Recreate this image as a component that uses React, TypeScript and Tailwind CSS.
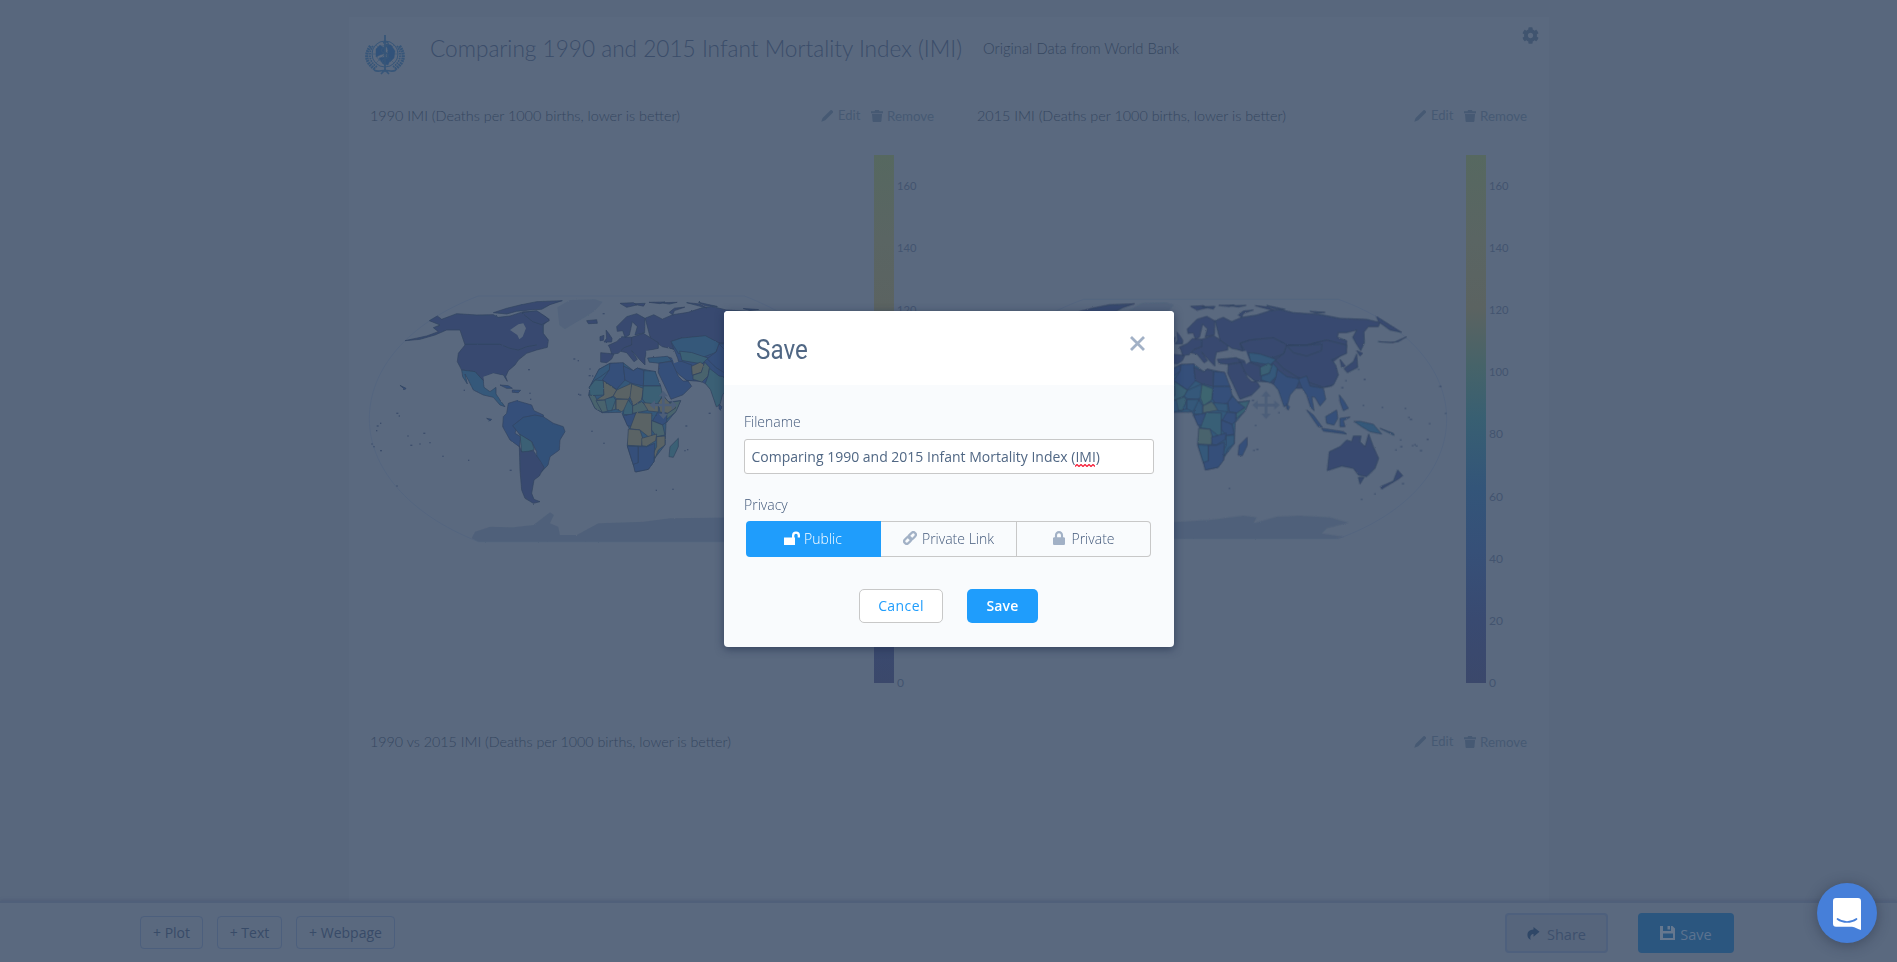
import React from "react";
import { FaCog, FaLock } from "react-icons/fa";

type Region = { d: string; a: string; b: string };

const NAVY = "#384a6f";
const BLUE = "#35507a";
const MID = "#34597a";
const TEAL = "#3a6174";
const GREEN = "#49636d";
const SAND = "#5a6465";
const PAGE = "#5a697f";

const americas: Region[] = [
  { d: "M238,122 L262,108 L275,118 L320,101 L380,105 L430,104 L445,112 L480,108 L520,95 L560,95 L598,118 L580,135 L580,160 L595,180 L592,202 L560,210 L530,220 L505,240 L495,255 L475,272 L467,290 L472,304 L460,285 L430,280 L405,290 L400,302 L375,275 L335,270 L322,245 L325,220 L345,195 L335,165 L330,150 L290,150 L255,165 L210,178 L165,182 L230,168 L265,155 L250,143 L270,135 Z", a: NAVY, b: NAVY },
  { d: "M430,98 L470,85 L510,75 L560,65 L637,62 L600,74 L575,88 L540,90 L500,94 L470,102 Z M515,98 L560,92 L590,112 L598,122 L575,134 L548,125 Z", a: NAVY, b: NAVY },
  { d: "M335,270 L375,275 L400,302 L402,322 L420,335 L438,322 L438,342 L450,360 L465,380 L450,375 L430,352 L400,345 L370,330 L355,300 L345,282 L352,312 L338,290 Z", a: MID, b: MID },
  { d: "M450,315 L475,317 L487,325 L470,325 Z M487,330 L512,331 L505,338 L487,337 Z M410,415 L425,418 L420,423 Z M150,316 L168,325 L165,329 Z", a: BLUE, b: BLUE },
  { d: "M475,370 L500,362 L545,375 L552,392 L580,405 L580,418 L520,412 L505,430 L495,460 L512,470 L508,500 L480,480 L458,440 L460,410 L470,400 Z", a: BLUE, b: BLUE },
  { d: "M488,437 L520,412 L555,405 L580,410 L610,430 L640,440 L645,455 L630,480 L628,510 L600,530 L594,555 L575,575 L560,540 L560,515 L545,485 L510,465 Z", a: "#335179", b: BLUE },
  { d: "M510,463 L545,485 L553,508 L530,518 L515,516 Z", a: TEAL, b: MID },
  { d: "M508,498 L515,516 L550,512 L572,545 L582,562 L568,588 L552,600 L545,640 L552,658 L570,665 L550,670 L525,655 L515,630 L510,570 Z", a: NAVY, b: NAVY },
];

const africaEurope: Region[] = [
  { d: "M747,268 L780,250 L822,250 L850,272 L862,264 L915,275 L935,340 L955,366 L992,362 L975,397 L948,430 L945,495 L914,535 L912,545 L895,568 L858,576 L845,540 L832,498 L840,450 L820,410 L815,397 L757,398 L735,385 L716,345 L720,320 Z", a: MID, b: MID },
  { d: "M710,122 L740,119 L742,130 L715,131 Z M768,150 L776,160 L786,175 L785,186 L762,186 L770,175 Z M750,170 L762,166 L760,181 L750,182 Z", a: NAVY, b: NAVY },
  { d: "M752,218 L792,222 L785,237 L770,248 L752,246 Z", a: NAVY, b: NAVY },
  { d: "M775,196 L800,185 L815,170 L845,172 L845,195 L820,205 L805,220 L785,222 L780,205 Z", a: NAVY, b: NAVY },
  { d: "M845,172 L880,160 L925,188 L925,205 L890,212 L885,235 L885,255 L870,240 L845,212 L862,238 L852,245 L830,218 L812,214 L822,203 L845,195 Z", a: NAVY, b: NAVY },
  { d: "M800,140 L830,110 L860,101 L885,115 L884,158 L855,165 L862,140 L847,125 L838,165 L825,172 L818,152 L802,154 Z", a: NAVY, b: NAVY },
  { d: "M810,70 L850,68 L860,75 L830,82 Z M897,67 L945,66 L930,71 Z M1010,68 L1050,72 L1070,84 L1040,76 Z", a: NAVY, b: NAVY },
  { d: "M747,268 L780,250 L778,270 L752,290 L735,300 L718,322 Z", a: MID, b: BLUE },
  { d: "M780,250 L820,248 L825,300 L800,328 L757,300 L778,270 Z", a: BLUE, b: BLUE },
  { d: "M820,258 L850,272 L862,264 L882,272 L880,318 L845,310 L825,300 Z", a: BLUE, b: NAVY },
  { d: "M882,272 L915,274 L932,318 L880,318 Z", a: MID, b: BLUE },
  { d: "M718,322 L735,300 L760,302 L762,345 L720,347 Z", a: TEAL, b: TEAL },
  { d: "M760,302 L800,330 L790,348 L765,360 L738,360 L762,345 Z", a: SAND, b: TEAL },
  { d: "M800,330 L845,310 L844,345 L835,358 L800,356 L790,348 Z", a: SAND, b: MID },
  { d: "M845,312 L880,325 L875,360 L850,378 L840,352 Z", a: SAND, b: "#3d6570" },
  { d: "M880,318 L932,318 L938,345 L925,370 L890,374 L877,357 Z", a: TEAL, b: BLUE },
  { d: "M925,367 L940,348 L955,365 L985,378 L955,400 L930,396 Z", a: SAND, b: BLUE },
  { d: "M957,368 L992,362 L978,395 L950,418 L950,402 L978,383 Z", a: GREEN, b: TEAL },
  { d: "M798,358 L838,358 L835,380 L815,395 L798,387 Z", a: SAND, b: MID },
  { d: "M716,345 L735,347 L750,380 L757,398 L735,385 Z", a: GREEN, b: MID },
  { d: "M738,362 L797,358 L797,388 L757,397 Z", a: GREEN, b: MID },
  { d: "M765,358 L790,350 L797,360 L785,392 L772,392 Z", a: TEAL, b: TEAL },
  { d: "M835,360 L848,378 L847,405 L820,403 L822,388 Z", a: TEAL, b: MID },
  { d: "M848,378 L875,365 L900,390 L870,396 L848,400 Z", a: GREEN, b: GREEN },
  { d: "M880,368 L925,372 L925,396 L895,393 Z", a: SAND, b: MID },
  { d: "M820,407 L858,400 L848,440 L832,437 Z", a: BLUE, b: BLUE },
  { d: "M858,398 L905,400 L905,450 L905,478 L870,450 L840,446 Z", a: SAND, b: "#375f76" },
  { d: "M922,398 L950,400 L950,425 L938,435 L908,422 Z", a: BLUE, b: BLUE },
  { d: "M905,422 L938,435 L945,465 L920,470 L905,450 Z", a: GREEN, b: BLUE },
  { d: "M835,447 L870,450 L878,475 L875,498 L832,496 Z", a: SAND, b: GREEN },
  { d: "M875,475 L920,462 L917,482 L890,499 L876,497 Z", a: SAND, b: BLUE },
  { d: "M920,470 L945,468 L945,495 L925,510 L915,535 L910,520 L920,500 Z", a: SAND, b: MID },
  { d: "M832,498 L865,500 L865,550 L850,555 Z", a: BLUE, b: MID },
  { d: "M865,500 L890,500 L914,490 L912,545 L895,568 L855,576 L850,553 L865,548 Z", a: BLUE, b: BLUE },
  { d: "M985,475 L985,500 L970,532 L957,530 L960,500 Z", a: TEAL, b: BLUE },
];

const asia: Region[] = [
  { d: "M200,190 L250,180 L380,195 L500,185 L556,215 L520,245 L530,285 L515,318 L495,322 L420,325 L408,325 L345,315 L325,305 L285,303 L240,255 L232,235 L262,245 L250,215 Z", a: BLUE, b: NAVY },
  { d: "M165,122 L190,112 L215,125 L245,112 L290,105 L330,92 L360,88 L400,98 L480,103 L540,115 L620,118 L660,128 L655,140 L625,140 L612,156 L613,188 L602,212 L588,190 L578,172 L590,150 L560,158 L535,158 L532,172 L560,182 L560,200 L555,222 L540,200 L500,180 L440,195 L380,195 L340,175 L270,180 L240,190 L248,212 L215,205 L180,180 Z", a: NAVY, b: NAVY },
  { d: "M650,110 L690,135 L725,157 L690,150 L655,125 Z M235,105 L250,93 L280,90 L250,100 L245,112 Z M320,76 L375,88 L340,86 Z M450,94 L495,97 L470,100 Z M125,80 L165,79 L160,87 Z M210,77 L258,76 L235,81 Z", a: NAVY, b: NAVY },
  { d: "M655,185 L700,188 L740,170 L715,185 L690,187 Z", a: NAVY, b: NAVY },
  { d: "M240,190 L270,180 L340,173 L382,195 L370,222 L335,235 L280,222 L262,225 Z", a: MID, b: NAVY },
  { d: "M380,195 L440,195 L500,180 L560,195 L560,220 L515,240 L527,255 L535,285 L520,315 L490,322 L455,310 L410,290 L370,265 L345,240 L372,220 Z", a: BLUE, b: NAVY },
  { d: "M380,197 L440,196 L486,192 L484,212 L440,228 L400,218 Z", a: BLUE, b: NAVY },
  { d: "M265,218 L300,222 L348,238 L330,255 L300,250 L272,245 Z", a: TEAL, b: MID },
  { d: "M172,238 L230,233 L242,246 L205,253 L177,250 Z", a: MID, b: NAVY },
  { d: "M242,246 L272,248 L300,258 L302,285 L325,305 L285,303 L262,285 L248,268 Z", a: BLUE, b: NAVY },
  { d: "M205,253 L242,248 L262,292 L275,305 L290,305 L300,320 L275,345 L240,358 L220,315 L203,280 Z", a: BLUE, b: NAVY },
  { d: "M300,262 L325,250 L338,258 L328,280 L302,288 Z", a: SAND, b: TEAL },
  { d: "M338,250 L352,265 L348,290 L330,308 L304,300 L304,288 L328,280 Z", a: GREEN, b: MID },
  { d: "M352,268 L380,290 L420,297 L410,322 L390,345 L382,375 L372,380 L355,330 L340,312 L348,290 Z", a: TEAL, b: BLUE },
  { d: "M380,372 L388,380 L385,390 L380,386 Z", a: BLUE, b: BLUE },
  { d: "M415,297 L440,288 L450,318 L490,325 L497,358 L480,378 L465,352 L455,350 L462,392 L452,382 L440,345 L425,322 Z", a: BLUE, b: BLUE },
  { d: "M440,390 L460,405 L487,442 L475,440 Z M485,445 L550,455 L560,462 L490,453 Z M497,410 L530,390 L533,415 L522,435 L500,430 Z M540,415 L570,411 L550,422 L555,440 L540,440 Z M538,345 L550,360 L565,385 L550,392 L540,365 Z", a: BLUE, b: BLUE },
  { d: "M582,424 L600,424 L640,433 L665,462 L630,455 L602,438 Z M660,445 L700,460 L702,466 Z", a: MID, b: MID },
  { d: "M590,222 L593,262 L562,278 L552,266 L580,245 Z M540,238 L556,258 L545,262 Z M590,212 L608,220 L600,228 Z", a: NAVY, b: NAVY },
  { d: "M508,515 L540,500 L560,480 L575,485 L580,468 L603,468 L600,485 L615,500 L626,462 L640,500 L656,535 L645,565 L620,590 L595,585 L580,565 L545,558 L502,572 Z M595,592 L612,592 L600,612 Z", a: NAVY, b: NAVY },
  { d: "M713,570 L728,587 L715,597 L665,627 L662,620 L700,603 Z", a: NAVY, b: NAVY },
];

const specks = [
  [840, 319], [857, 400], [809, 431], [802, 478], [765, 494], [770, 498], [782, 512], [758, 497], [722, 480], [723, 500], [747, 412], [736, 385], [752, 418],
  [610, 376], [667, 382], [613, 298], [645, 642], [605, 658], [728, 611], [287, 436], [282, 511], [291, 508], [208, 625], [357, 398], [278, 361], [708, 510], [596, 268], [546, 323], [558, 302],
];
const westSpecks = [
  [141, 400], [148, 408], [92, 430], [82, 438], [66, 492], [72, 500], [92, 512], [80, 452], [174, 468], [222, 460], [240, 488], [210, 492], [183, 496], [141, 618], [356, 541],
  [481, 571], [343, 331], [279, 529], [672, 237], [685, 242], [720, 267], [718, 287], [728, 288], [686, 343], [690, 345], [762, 490], [726, 454], [760, 101], [919, 631], [969, 628], [1008, 438], [1005, 512], [1013, 509], [1078, 400], [540, 340], [542, 358], [536, 269],
];

function Lands({ items, plot }: { items: Region[]; plot: "a" | "b" }) {
  return (
    <>
      {items.map((r, i) => (
        <path key={i} d={r.d} fill={r[plot]} stroke="#31425f" strokeWidth="2" strokeLinejoin="round" />
      ))}
    </>
  );
}

function MoveMark({ x, y }: { x: number; y: number }) {
  return (
    <g transform={`translate(${x} ${y})`} fill="#4c5e79">
      <path d="M-4,-28 h8 V-4 H28 v8 H4 V28 h-8 V4 H-28 v-8 H-4 Z" />
      <path d="M0,-42 L14,-26 H-14 Z M0,42 L14,26 H-14 Z M-41,0 L-25,-14 V14 Z M41,0 L25,-14 V14 Z" />
    </g>
  );
}

function Dots({ points }: { points: number[][] }) {
  return (
    <g fill="#3d4e6c">
      {points.map(([x, y], i) => (
        <rect key={i} x={x - 2} y={y - 2} width={i % 3 ? 4 : 6} height="4" />
      ))}
    </g>
  );
}

function Scale({ x, id }: { x: number; id: string }) {
  return (
    <g>
      <defs>
        <linearGradient id={id} x1="0" x2="0" y1="0" y2="1">
          <stop offset="0" stopColor="#566860" />
          <stop offset="0.16" stopColor="#5a6563" />
          <stop offset="0.29" stopColor="#5b6361" />
          <stop offset="0.4" stopColor="#466369" />
          <stop offset="0.5" stopColor="#385f72" />
          <stop offset="0.63" stopColor="#335579" />
          <stop offset="0.75" stopColor="#365078" />
          <stop offset="0.88" stopColor="#394a71" />
          <stop offset="1" stopColor="#3b486b" />
        </linearGradient>
      </defs>
      <rect x={x} y="25" width="20" height="528" fill={`url(#${id})`} />
      <g fontFamily="Lato, sans-serif" fontSize="12" fill="#43546f">
        {[160, 140, 120, 100, 80, 60, 40, 20, 0].map((v, i) => (
          <text key={v} x={x + 23} y={60 + i * 62.1} textLength={v > 99 ? 19.5 : v > 9 ? 14 : 7} lengthAdjust="spacingAndGlyphs">
            {v}
          </text>
        ))}
      </g>
    </g>
  );
}

function Roughen({ id }: { id: string }) {
  return (
    <filter id={id} x="-5%" y="-5%" width="110%" height="110%">
      <feTurbulence type="fractalNoise" baseFrequency="0.22" numOctaves="2" seed="4" result="n" />
      <feDisplacementMap in="SourceGraphic" in2="n" scale="5" xChannelSelector="R" yChannelSelector="G" />
    </filter>
  );
}

const greenland = "M622,82 L660,60 L735,58 L758,66 L735,92 L700,115 L665,135 L645,148 L628,135 Z";

function Map1990() {
  return (
    <svg className="block h-[570px] w-[600px]" viewBox="0 0 600 570">
      <defs>
        <Roughen id="rough1" />
      </defs>
      <g transform="translate(2 150) scale(0.33333)">
        <path d="M385,48 H1183 C1398,130 1510,270 1510,416 C1510,560 1398,700 1183,785 H385 C170,700 58,560 58,416 C58,270 170,130 385,48 Z" fill="none" stroke="#54657f" strokeWidth="3" />
        <g filter="url(#rough1)">
          <path d={greenland} fill="#52647c" />
          <path d="M365,775 L375,755 L420,740 L490,742 L550,735 L600,697 L612,705 L600,730 L625,740 L630,765 L680,765 L745,730 L880,725 L960,715 L1190,712 L1190,785 L385,785 Z" fill="#50617a" />
          <g transform="translate(715.5 -11.3) scale(1.031)">
            <Lands items={asia} plot="a" />
          </g>
          <Lands items={americas} plot="a" />
          <Lands items={africaEurope} plot="a" />
          <path d="M480,150 L505,133 L520,130 L528,145 L518,170 L508,178 L502,165 Z M400,290 L430,280 L462,288 L450,300 L420,318 L404,315 Z M888,212 L925,210 L935,225 L905,230 L890,225 Z M955,205 L970,210 L985,245 L972,250 Z" fill={PAGE} />
          <path d="M345,193 H450 L480,205 L505,210 L530,200 L560,195" fill="none" stroke="#31425f" strokeWidth="2" />
        </g>
        <Dots points={westSpecks} />
        <MoveMark x={940} y={375} />
      </g>
      <Scale x={526} id="scale1" />
    </svg>
  );
}

function Map2015() {
  return (
    <svg className="block h-[570px] w-[600px]" viewBox="0 0 600 570">
      <defs>
        <Roughen id="rough2" />
      </defs>
      <g transform="translate(212 150) scale(0.33333)">
        <path d="M-229,58 H535 C750,135 860,275 860,417 C860,560 750,698 535,776 H-229 C-444,698 -554,560 -554,417 C-554,275 -444,135 -229,58 Z" fill="none" stroke="#54657f" strokeWidth="3" />
        <g filter="url(#rough2)">
          <path d="M-240,740 L60,725 L150,720 L250,707 L290,712 L280,730 L350,710 L420,707 L510,712 L565,728 L500,745 L485,760 L550,770 L530,776 L-229,776 Z" fill="#50617a" />
          <g transform="translate(-694 11) scale(0.97)">
            <path d={greenland} fill="#52647c" />
            <Lands items={americas} plot="b" />
            <Lands items={africaEurope} plot="b" />
          </g>
          <Lands items={asia} plot="b" />
          <path d="M175,218 L215,215 L222,228 L200,232 L178,230 Z M245,215 L258,212 L270,245 L258,252 Z" fill={PAGE} />
        </g>
        <Dots points={specks} />
        <MoveMark x={318} y={375} />
      </g>
      <Scale x={518} id="scale2" />
    </svg>
  );
}

function PlotHead({ title, width, pad }: { title: string; width: string; pad: string }) {
  return (
    <div className={`flex h-6 items-center justify-between font-['Lato'] text-[#35475f] ${pad}`}>
      <svg className={`h-6 overflow-visible text-[14.5px] font-light ${width}`}>
        <text x="0" y="17" fill="currentColor" textLength="100%" lengthAdjust="spacingAndGlyphs">
          {title}
        </text>
      </svg>
      <div className="flex items-center text-[13px] text-[#465973]">
        <svg className="mr-[5px] size-3" viewBox="0 0 12 12" fill="currentColor">
          <path d="M9.300.4a1.200 1.200 0 0 1 1.700 0l.7.7a1.200 1.200 0 0 1 0 1.700L4.200 10.300.3 11.700 1.600 7.900z" />
        </svg>
        <span className="w-[33px]">Edit</span>
        <svg className="mr-1 h-3 w-3" viewBox="0 0 12 12" fill="currentColor">
          <path d="M0 1.300h3.500L4.200 0h3.600l.7 1.300H12v1.900H0zM1 4h10l-.6 7a1 1 0 0 1-1 1H2.600a1 1 0 0 1-1-1z" />
        </svg>
        <svg className="h-5 w-[47px] overflow-visible">
          <text x="0" y="15" fill="currentColor" textLength="47" lengthAdjust="spacingAndGlyphs">
            Remove
          </text>
        </svg>
      </div>
    </div>
  );
}

function Emblem() {
  return (
    <svg className="h-[42px] w-[44px]" viewBox="0 0 44 42" fill="none" stroke="#375679">
      <circle cx="22" cy="20" r="13" strokeWidth="1" />
      <circle cx="22" cy="20" r="8.500" strokeWidth="0.6" />
      <path d="M9 20h26M13 11l18 18M31 11L13 29" strokeWidth="0.5" />
      <path d="M13 15l4-4 4 3 1 5-5 2-4 2zM23 10l5 1 4 6-1 7-4 4-3-5 1-6zM16 24l6-1 6 1-3 7-5-1z" fill="#31527a" strokeWidth="0.5" />
      <path d="M7.500 12C1.500 20 2.500 29 12 35M36.500 12C42.500 20 41.500 29 32 35" strokeWidth="3.200" strokeDasharray="1.800 0.700" />
      <path d="M10 12C5 19 6 28 14 33M34 12C39 19 38 28 30 33" strokeWidth="1.800" strokeDasharray="1.600 0.900" />
      <path d="M11 36c5 3 9-1 11 1 2-2 6 2 11-1M18 40l4-4 4 4" strokeWidth="1.600" />
      <path d="M22 1v36" strokeWidth="1.800" />
      <path d="M20 9c6-3 7 2 2 4s-5 5 0 6 4 5 0 6-3 4 0 5" strokeWidth="1.400" />
    </svg>
  );
}

function Dashboard() {
  return (
    <main className="h-[901px] overflow-hidden pl-[349px] pt-[17px]">
      <div className="h-[900px] w-[1200px] bg-[#5a697f]">
        <header className="flex h-[87px] pl-[14px] pt-[17px] font-['Lato'] text-[#35475f]">
          <Emblem />
          <svg className="ml-[23px] mt-px h-8 w-[533px] overflow-visible text-[24px] font-light text-[#3b4d6a]">
            <text x="0" y="21.500" fill="currentColor" textLength="532" lengthAdjust="spacingAndGlyphs">
              Comparing 1990 and 2015 Infant Mortality Index (IMI)
            </text>
          </svg>
          <svg className="ml-5 mt-px h-8 w-[196px] overflow-visible text-[15px] font-light">
            <text x="0" y="18.500" fill="currentColor" textLength="196" lengthAdjust="spacingAndGlyphs">
              Original Data from World Bank
            </text>
          </svg>
          <FaCog className="-mt-[7px] ml-[343px] size-[17px] text-[#40546f]" />
        </header>
        <div className="-ml-px flex">
          <section className="w-[600px]">
            <PlotHead title="1990 IMI (Deaths per 1000 births, lower is better)" width="w-[310px]" pad="pl-[22px] pr-[14px]" />
            <div className="mt-0.5">
              <Map1990 />
            </div>
          </section>
          <section className="w-[600px]">
            <PlotHead title="2015 IMI (Deaths per 1000 births, lower is better)" width="w-[309px]" pad="pl-[29px] pr-[21px]" />
            <div className="mt-0.5">
              <Map2015 />
            </div>
          </section>
        </div>
        <div className="-ml-px mt-[30px] w-[1200px]">
          <PlotHead title="1990 vs 2015 IMI (Deaths per 1000 births, lower is better)" width="w-[361px]" pad="pl-[22px] pr-[21px]" />
          <div className="mt-[147px] flex pl-[129px]">
            <span className="h-1 w-[3px] bg-[#3c4d6a]" />
            <span className="ml-5 h-1 w-[3px] bg-[#46576f]" />
            <span className="ml-[569px] h-1 w-1 bg-[#3c4d6a]" />
            <span className="ml-[194px] h-1 w-2 bg-[#384a6f]" />
          </div>
        </div>
      </div>
    </main>
  );
}

function Footer() {
  const add = "flex h-[33px] items-center justify-center rounded-[4px] border border-[#4c5f7d] pb-px text-[14px] text-[#384b68]";
  return (
    <footer className="relative flex h-[61px] items-start border-t-2 border-[#50607a] bg-[#5a697f] pl-[140px] pr-[163px] shadow-[0_-1px_3px_rgba(60,75,105,0.35)]">
      <div className="mt-[13px] flex gap-[14px]">
        <button className={`w-[63px] ${add}`}>+ Plot</button>
        <button className={`w-[65px] ${add}`}>+ Text</button>
        <button className={`w-[99px] ${add}`}>+ Webpage</button>
      </div>
      <div className="ml-auto mt-[10px] flex gap-[30px]">
        <button className="flex h-10 w-[103px] items-center justify-center gap-[7px] rounded-[4px] border-2 border-[#4e607d] bg-[#56657c] pt-[3px] text-[14.5px] text-[#3d506d]">
          <svg className="-mt-0.5 size-[13px]" viewBox="0 0 13 14" fill="#2f4767">
            <path d="M6.500 0L13 5 6.500 10.500V7.500C3.500 7.500 2.500 10 3.500 14 .5 12 0 10 0 8.500 0 5 2.500 3 6.500 2.800z" />
          </svg>
          Share
        </button>
        <button className="flex h-10 w-24 items-center justify-center gap-[5px] rounded-[4px] bg-[#2b567f] pt-[3px] text-[14.500px] text-[#5c7390]">
          <svg className="-mt-0.5 size-[15px]" viewBox="0 0 15 15" fill="#66788f">
            <path fillRule="evenodd" d="M0 0h3v5h8V0h1.500L15 2.500V14H0zM3 7.500V12h10V7.500z" />
            <path d="M7.500 0h2.500v3.500H7.500z" />
          </svg>
          Save
        </button>
      </div>
    </footer>
  );
}

function SaveDialog() {
  return (
    <div className="absolute left-[724px] top-[311px] h-[336px] w-[450px] overflow-hidden rounded-[4px] bg-[#f9fbfd] shadow-[0_2px_8px_rgba(30,45,75,0.65)]">
      <div className="flex h-[74px] justify-between bg-white pl-8 pr-[29px]">
        <h2 className="mt-[18px] h-10 w-[60px] origin-left scale-x-[0.850] font-['Roboto'] text-[28.5px] leading-[41px] text-[#506784]">Save</h2>
        <svg className="mt-[24.5px] size-[15px]" viewBox="0 0 15 15" stroke="#a2b1c6" strokeWidth="2.800">
          <path d="M1 1l13 13M14 1L1 14" />
        </svg>
      </div>
      <div className="px-5 pt-[26px] text-[14px] text-[#506784]">
        <div className="h-[28px] font-light leading-[22px] text-[#42587a]">Filename</div>
        <div className="flex h-[35px] w-[410px] items-center whitespace-pre rounded-[3px] border border-[#c8c8c8] bg-white px-[6.500px]">
          <span>Comparing 1990 and 2015 Infant Mortality Index (</span>
          <span className="relative">
            IMI
            <svg className="absolute bottom-0 left-0 h-[3px] w-5" viewBox="0 0 20 3" fill="none" stroke="#f5223c" strokeWidth="1.300">
              <path d="M0 2.500l2-2 2 2 2-2 2 2 2-2 2 2 2-2 2 2 2-2 2 2" />
            </svg>
          </span>
          <span>)</span>
        </div>
        <div className="mt-5 h-[27px] font-light leading-[22px] text-[#42587a]">Privacy</div>
        <div className="ml-0.5 flex h-9 w-[405px] font-light text-[#42587a]">
          <div className="flex w-[135px] items-center justify-center gap-1 rounded-l-[4px] bg-[#1f9dfc] pb-px pr-px text-white">
            <svg className="-mt-px h-[14px] w-4" viewBox="0 0 16 14" fill="white">
              <path d="M0 6.500h8V4.500a4 4 0 0 1 8 0V6.500h-2.300V4.500a1.700 1.700 0 0 0-3.400 0v2H11V14H0z" />
            </svg>
            <span>Public</span>
          </div>
          <div className="flex w-[136px] items-center justify-center gap-[5px] border-y border-r border-[#c8c8c8] pb-px">
            <svg className="size-[14px] -mt-px" viewBox="0 0 14 14" fill="none" stroke="#a2b1c6" strokeWidth="2.300">
              <rect x="-3.900" y="-2.500" width="7.800" height="5" rx="2.500" transform="translate(9.300 4.700) rotate(-45)" />
              <rect x="-3.900" y="-2.500" width="7.800" height="5" rx="2.500" transform="translate(4.700 9.300) rotate(-45)" />
            </svg>
            Private Link
          </div>
          <div className="flex flex-1 items-center justify-center gap-[6px] rounded-r-[4px] border-y border-r border-[#c8c8c8] pb-px pl-px">
            <FaLock className="-mt-0.5 h-[14px] w-[12px] text-[#a2b1c6]" preserveAspectRatio="none" />
            Private
          </div>
        </div>
        <div className="ml-[115px] mt-8 flex gap-6">
          <button className="h-[34px] w-[84px] rounded-[5px] border border-[#c8c8c8] bg-white pb-px text-[14px] tracking-[0.4px] text-[#1f9dfc]">Cancel</button>
          <button className="h-[34px] w-[71px] rounded-[5px] bg-[#1f9dfc] pb-px text-[14px] font-semibold tracking-[0.2px] text-white">Save</button>
        </div>
      </div>
    </div>
  );
}

export default function App() {
  return (
    <div className="relative h-[962px] w-[1897px] overflow-hidden bg-[#58677d] font-['Open_Sans',sans-serif]">
      <Dashboard />
      <Footer />
      <SaveDialog />
      <button className="absolute left-[1817px] top-[883px] flex size-[60px] items-center justify-center rounded-full bg-[#467fd9] shadow-[0_2px_14px_rgba(30,40,60,0.45)]">
        <svg className="mt-0.5 h-8 w-7" viewBox="0 0 28 32" fill="white">
          <path d="M3 0h22a3 3 0 0 1 3 3v29c-3-.500-6-3.200-9-3.200H3a3 3 0 0 1-3-3V3a3 3 0 0 1 3-3z" />
          <path d="M4.500 21c5.500 4 13.500 4 19 0" fill="none" stroke="#467fd9" strokeWidth="1.700" strokeLinecap="round" />
        </svg>
      </button>
    </div>
  );
}
